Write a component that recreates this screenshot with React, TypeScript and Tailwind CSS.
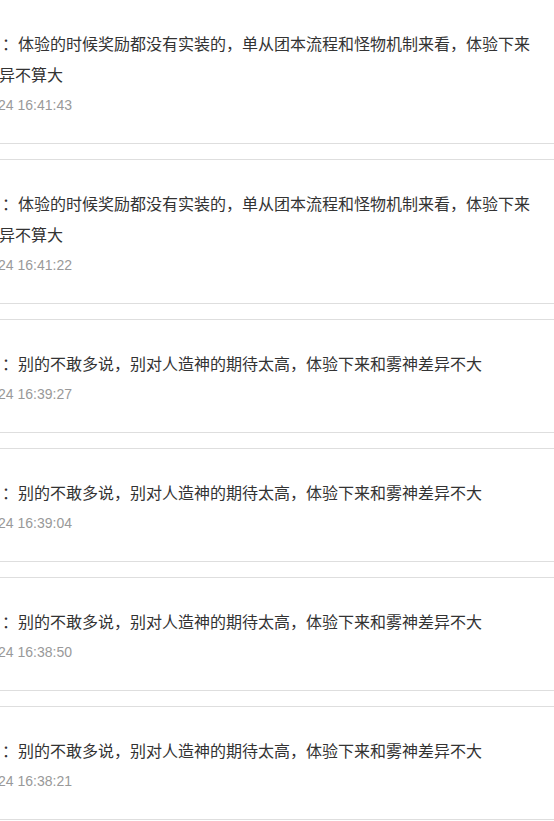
import React from "react";

type Comment = { user: string; text: string; time: string };

const longText =
  "体验的时候奖励都没有实装的，单从团本流程和怪物机制来看，体验下来和雾神差异不算大";
const shortText =
  "别的不敢多说，别对人造神的期待太高，体验下来和雾神差异不大";

const comments: Comment[] = [
  { user: "旅行者", text: longText, time: "2023-11-24 16:41:43" },
  { user: "旅行者", text: longText, time: "2023-11-24 16:41:22" },
  { user: "旅行者", text: shortText, time: "2023-11-24 16:39:27" },
  { user: "旅行者", text: shortText, time: "2023-11-24 16:39:04" },
  { user: "旅行者", text: shortText, time: "2023-11-24 16:38:50" },
  { user: "旅行者", text: shortText, time: "2023-11-24 16:38:21" },
];

export default function App() {
  return (
    <div className="w-[554px] h-[821px] overflow-hidden bg-white">
      <div className="-mt-px -ml-[100px] w-[720px]">
        {comments.map((c, i) => (
          <div
            key={i}
            className="mb-[15px] border-y border-[#dedede] bg-white pl-[35px]"
          >
            <div className="w-[600px] pt-[28px] pb-[28px]">
              <p
                className="text-[16px] leading-[31px] text-[#333333]"
                style={{ fontFamily: '"Noto Sans CJK SC", "Noto Sans", sans-serif' }}
              >
                <span className="inline-block w-[67px] overflow-hidden whitespace-nowrap align-top">
                  {c.user}
                </span>
                ：{c.text}
              </p>
              <p
                className="mt-[5px] pl-[8px] text-[14px] leading-[20px] text-[#999999]"
                style={{ fontFamily: '"Liberation Sans", Arial, sans-serif' }}
              >
                {c.time}
              </p>
            </div>
          </div>
        ))}
      </div>
    </div>
  );
}
